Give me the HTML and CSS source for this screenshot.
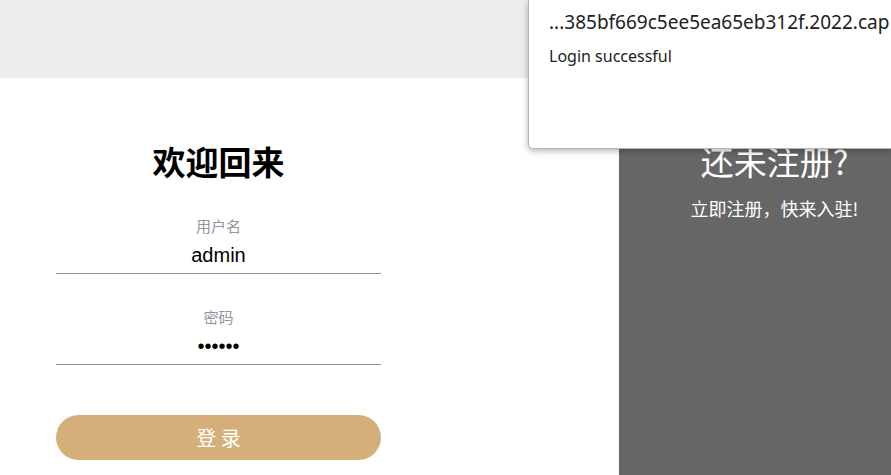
FILE: index.html
```html
<!DOCTYPE html>
<html lang="zh-CN">
<head>
<meta charset="utf-8">
<title>登录</title>
<link rel="stylesheet" href="styles.css">
</head>
<body>
<main class="card">
  <form class="login">
    <h2 class="title">欢迎回来</h2>
    <div class="field">
      <label class="label" for="user">用户名</label>
      <input class="input" id="user" type="text" value="admin">
    </div>
    <div class="field">
      <label class="label" for="password">密码</label>
      <input class="input" id="password" type="password" value="123456">
    </div>
    <button class="submit" type="button">登 录</button>
  </form>
  <section class="signup">
    <h2 class="signup-title">还未注册?</h2>
    <p class="signup-text">立即注册，快来入驻!</p>
  </section>
</main>
<div class="dialog" role="alertdialog" aria-labelledby="origin" aria-describedby="message">
  <p class="origin" id="origin">...385bf669c5ee5ea65eb312f.2022.cap</p>
  <p class="message" id="message">Login successful</p>
</div>
</body>
</html>
```
FILE: styles.css
```css
* {
  box-sizing: border-box;
}

body {
  margin: 0;
  padding-top: 78px;
  min-height: 100vh;
  display: flex;
  background: #ededed;
  font-family: "Noto Sans CJK SC", sans-serif;
  overflow: hidden;
}

h2,
p {
  margin: 0;
}

.card {
  flex: 1;
  display: grid;
  grid-template-columns: 619fr 272fr;
  background: #fff;
}

.login {
  padding: 60px 238px 0 56px;
  text-align: center;
}

.title {
  margin-bottom: 30px;
  font-size: 33px;
  line-height: 46px;
  font-weight: 700;
  color: #000;
}

.field {
  margin-bottom: 31px;
}

.label {
  display: block;
  font-size: 15px;
  line-height: 24px;
  font-weight: 400;
  color: #90959f;
}

.input {
  display: block;
  width: 100%;
  height: 36px;
  padding: 0;
  border: 0;
  border-bottom: 1px solid #909090;
  background: none;
  font-family: "Liberation Sans", Arial, sans-serif;
  font-size: 20px;
  text-align: center;
  color: #000;
  outline: none;
}

.submit {
  display: block;
  width: 100%;
  height: 45px;
  margin-top: 50px;
  padding: 0;
  border: 0;
  border-radius: 23px;
  background: #d4af7a;
  color: #fff;
  font-family: inherit;
  font-size: 20px;
  font-weight: 400;
}

.signup {
  padding: 60px 0 0 39px;
  background: #666;
  color: #fff;
  text-align: center;
  white-space: nowrap;
}

.signup-title {
  margin-bottom: 10px;
  font-size: 33px;
  line-height: 46px;
  font-weight: 400;
}

.signup-text {
  font-size: 18px;
  line-height: 28px;
}

.dialog {
  position: absolute;
  top: 0;
  left: 528px;
  right: 0;
  height: 149px;
  padding: 8px 0 0 20px;
  border: 1px solid #b4b4b4;
  border-width: 0 0 1px 1px;
  border-bottom-left-radius: 5px;
  background: #fff;
  box-shadow: 0 2px 6px rgba(0, 0, 0, 0.3);
  color: #202124;
  font-family: "Noto Sans", "Open Sans", sans-serif;
  white-space: nowrap;
  overflow: hidden;
}

.origin {
  margin-bottom: 8px;
  font-size: 19px;
  line-height: 28px;
}

.message {
  font-size: 16px;
  line-height: 24px;
}
```
